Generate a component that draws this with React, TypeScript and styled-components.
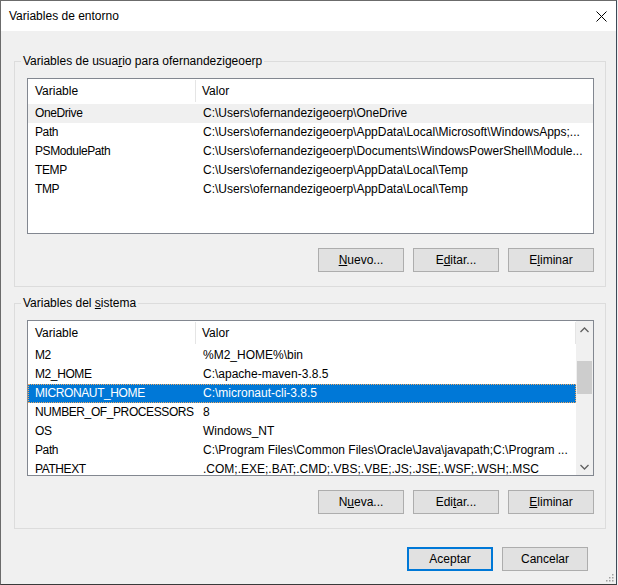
import styled, { createGlobalStyle } from "styled-components";

const GlobalStyle = createGlobalStyle`
  html, body {
    margin: 0;
    padding: 0;
    background: #f0f0f0;
  }
  * {
    box-sizing: border-box;
  }
`;

const Window = styled.div`
  position: relative;
  width: 617px;
  height: 585px;
  background: #f0f0f0;
  border: 1px solid #6b6b6b;
  border-right-color: #3d4a58;
  border-bottom-color: #3a3a3a;
  font-family: "Liberation Sans", Arial, sans-serif;
  font-size: 12px;
  color: #000;
`;

const TitleBar = styled.div`
  display: flex;
  align-items: center;
  height: 30px;
  background: #fff;
  padding-left: 8px;
`;

const Title = styled.div`
  flex: 1;
  font-size: 12px;
  line-height: 16px;
`;

const CloseButton = styled.div`
  display: flex;
  align-items: center;
  justify-content: center;
  width: 30px;
  height: 30px;
`;

const Content = styled.div`
  padding-top: 22px;
`;

const Group = styled.fieldset<{ $gap?: number }>`
  margin: ${(p) => p.$gap || 0}px 0 0 13px;
  width: 592px;
  min-width: 0;
  padding: 9px 11px 14px 12px;
  border: 1px solid #dcdcdc;
`;

const Legend = styled.legend`
  margin-left: -6px;
  padding: 0 2px;
  font-size: 12px;
  line-height: 16px;
`;

const Key = styled.u`
  text-decoration: underline;
  text-underline-offset: 1px;
`;

const Table = styled.div`
  display: flex;
  width: 567px;
  height: 156px;
  background: #fff;
  border: 1px solid #828790;
  overflow: hidden;
`;

const ListArea = styled.div`
  flex: 1;
  min-width: 0;
  overflow: hidden;
`;

const Header = styled.div`
  display: grid;
  grid-template-columns: 168px 1fr;
  height: 25px;
`;

const HeaderSlot = styled.div`
  height: 100%;
  padding: 1px 0 2px;
  display: flex;
`;

const HeaderCell = styled.div<{ $divider?: boolean; $first?: boolean }>`
  flex: 1;
  display: flex;
  align-items: center;
  padding-left: ${(p) => (p.$first ? 7 : 6)}px;
  border-right: 1px solid ${(p) => (p.$divider ? "#e5e5e5" : "transparent")};
  line-height: 16px;
`;

const Row = styled.div<{ $state?: "hover" | "selected" }>`
  display: grid;
  grid-template-columns: 168px 1fr;
  height: 19px;
  align-items: center;
  line-height: 17px;
  background: ${(p) =>
    p.$state === "selected"
      ? "#0078d7"
      : p.$state === "hover"
      ? "#f0f0f0"
      : "transparent"};
  color: ${(p) => (p.$state === "selected" ? "#fff" : "#000")};
  outline: ${(p) => (p.$state === "selected" ? "1px dotted #f0a860" : "none")};
  outline-offset: -1px;
`;

const NameCell = styled.div`
  padding-left: 7px;
  white-space: nowrap;
  overflow: hidden;
  letter-spacing: -0.4px;
`;

const ValueCell = styled.div`
  padding: 0 4px 0 7px;
  white-space: nowrap;
  overflow: hidden;
  text-overflow: ellipsis;
`;

const Scrollbar = styled.div`
  width: 17px;
  display: flex;
  flex-direction: column;
  background: #f0f0f0;
`;

const ScrollArrow = styled.div`
  height: 17px;
  display: flex;
  align-items: center;
  justify-content: center;
`;

const ScrollTrack = styled.div`
  flex: 1;
  padding: 23px 1px 0;
`;

const Thumb = styled.div`
  height: 33px;
  background: #cdcdcd;
`;

const ButtonRow = styled.div`
  display: flex;
  justify-content: flex-end;
  gap: 9px;
  margin-top: 14px;
`;

const Button = styled.div<{ $default?: boolean }>`
  width: 86px;
  height: 24px;
  display: flex;
  align-items: center;
  justify-content: center;
  background: #e1e1e1;
  border: ${(p) => (p.$default ? "2px solid #0078d7" : "1px solid #adadad")};
  font-size: 12px;
  line-height: 16px;
`;

const Footer = styled.div`
  display: flex;
  justify-content: flex-end;
  gap: 9px;
  margin-top: 18px;
  padding-right: 28px;
`;

const SizeGrip = styled.svg`
  position: absolute;
  right: 2px;
  bottom: 2px;
`;

type Variable = { name: string; value: string; state?: "hover" | "selected" };

const userVars: Variable[] = [
  { name: "OneDrive", value: "C:\\Users\\ofernandezigeoerp\\OneDrive", state: "hover" },
  { name: "Path", value: "C:\\Users\\ofernandezigeoerp\\AppData\\Local\\Microsoft\\WindowsApps;..." },
  { name: "PSModulePath", value: "C:\\Users\\ofernandezigeoerp\\Documents\\WindowsPowerShell\\Module..." },
  { name: "TEMP", value: "C:\\Users\\ofernandezigeoerp\\AppData\\Local\\Temp" },
  { name: "TMP", value: "C:\\Users\\ofernandezigeoerp\\AppData\\Local\\Temp" },
];

const systemVars: Variable[] = [
  { name: "M2", value: "%M2_HOME%\\bin" },
  { name: "M2_HOME", value: "C:\\apache-maven-3.8.5" },
  { name: "MICRONAUT_HOME", value: "C:\\micronaut-cli-3.8.5", state: "selected" },
  { name: "NUMBER_OF_PROCESSORS", value: "8" },
  { name: "OS", value: "Windows_NT" },
  { name: "Path", value: "C:\\Program Files\\Common Files\\Oracle\\Java\\javapath;C:\\Program ..." },
  { name: "PATHEXT", value: ".COM;.EXE;.BAT;.CMD;.VBS;.VBE;.JS;.JSE;.WSF;.WSH;.MSC" },
];

const Chevron = ({ up }: { up?: boolean }) => (
  <svg width="9" height="6" viewBox="0 0 9 6">
    <path
      d={up ? "M0.5 5 L4.5 1 L8.5 5" : "M0.5 1 L4.5 5 L8.5 1"}
      fill="none"
      stroke="#606060"
      strokeWidth="1.3"
    />
  </svg>
);

const VarTable = ({ rows, scroll }: { rows: Variable[]; scroll?: boolean }) => (
  <Table>
    <ListArea>
      <Header>
        <HeaderSlot>
          <HeaderCell $first $divider>
            Variable
          </HeaderCell>
        </HeaderSlot>
        <HeaderSlot>
          <HeaderCell $divider={scroll}>Valor</HeaderCell>
        </HeaderSlot>
      </Header>
      {rows.map((r) => (
        <Row key={r.name + r.value} $state={r.state}>
          <NameCell>{r.name}</NameCell>
          <ValueCell>{r.value}</ValueCell>
        </Row>
      ))}
    </ListArea>
    {scroll && (
      <Scrollbar>
        <ScrollArrow>
          <Chevron up />
        </ScrollArrow>
        <ScrollTrack>
          <Thumb />
        </ScrollTrack>
        <ScrollArrow>
          <Chevron />
        </ScrollArrow>
      </Scrollbar>
    )}
  </Table>
);

export default function App() {
  return (
    <>
      <GlobalStyle />
      <Window>
        <TitleBar>
          <Title>Variables de entorno</Title>
          <CloseButton>
            <svg width="11" height="11" viewBox="0 0 11 11">
              <path d="M0.5 0.5 L10.5 10.5 M10.5 0.5 L0.5 10.5" stroke="#000" strokeWidth="1" />
            </svg>
          </CloseButton>
        </TitleBar>
        <Content>
          <Group>
            <Legend>
              Variables de usua<Key>r</Key>io para ofernandezigeoerp
            </Legend>
            <VarTable rows={userVars} />
            <ButtonRow>
              <Button>
                <Key>N</Key>uevo...
              </Button>
              <Button>
                E<Key>d</Key>itar...
              </Button>
              <Button>
                E<Key>l</Key>iminar
              </Button>
            </ButtonRow>
          </Group>
          <Group $gap={8}>
            <Legend>
              Variables del <Key>s</Key>istema
            </Legend>
            <VarTable rows={systemVars} scroll />
            <ButtonRow>
              <Button>
                N<Key>u</Key>eva...
              </Button>
              <Button>
                Edi<Key>t</Key>ar...
              </Button>
              <Button>
                <Key>E</Key>liminar
              </Button>
            </ButtonRow>
          </Group>
          <Footer>
            <Button $default>Aceptar</Button>
            <Button>Cancelar</Button>
          </Footer>
        </Content>
        <SizeGrip width="10" height="10" viewBox="0 0 10 10">
          {[
            [8, 2],
            [5, 5],
            [8, 5],
            [2, 8],
            [5, 8],
            [8, 8],
          ].map(([x, y]) => (
            <rect key={`${x}-${y}`} x={x} y={y} width="1.5" height="1.5" fill="#a0a0a0" />
          ))}
        </SizeGrip>
      </Window>
    </>
  );
}
